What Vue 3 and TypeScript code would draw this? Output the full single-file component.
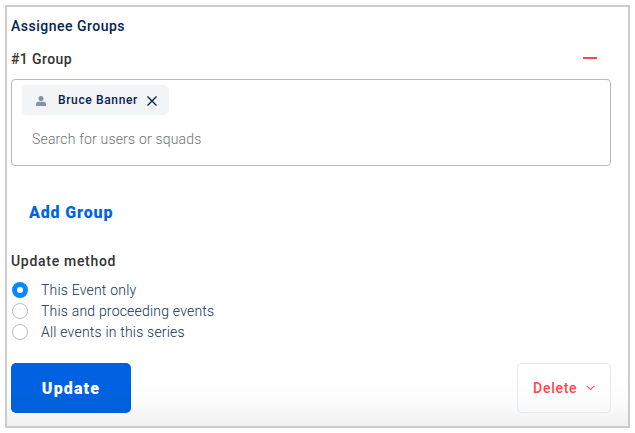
<script setup lang="ts">
import { ref } from 'vue'

interface Option {
  value: string
  label: string
}

const options: Option[] = [
  { value: 'single', label: 'This Event only' },
  { value: 'following', label: 'This and proceeding events' },
  { value: 'all', label: 'All events in this series' },
]
const method = ref('single')
const users = ref(['Bruce Banner'])

function removeUser(name: string) {
  users.value = users.value.filter((u) => u !== name)
}
</script>

<template>
  <main class="panel">
    <h2 class="title">Assignee Groups</h2>
    <div class="group-head">
      <span class="group-name">#1 Group</span>
      <button class="minus" aria-label="Remove group"></button>
    </div>
    <div class="picker">
      <div v-for="user in users" :key="user" class="chip">
        <svg class="person" width="10" height="10" viewBox="0 0 10 10">
          <circle cx="5" cy="2.5" r="2.5" />
          <path d="M0 10V8.200C0 6.400 1 5.700 2.500 5.700h5C9 5.700 10 6.400 10 8.200V10z" />
        </svg>
        <span class="chip-name">{{ user }}</span>
        <svg class="close" width="10" height="10" viewBox="0 0 10 10" @click="removeUser(user)">
          <path d="M.5.5l9 9M9.500.5l-9 9" />
        </svg>
      </div>
      <div class="search">Search for users or squads</div>
    </div>
    <button class="add">Add Group</button>
    <h3 class="subtitle">Update method</h3>
    <div class="options">
      <label v-for="o in options" :key="o.value" class="option" @click="method = o.value">
        <span class="radio" :class="{ on: method === o.value }"></span>
        <span class="option-text">{{ o.label }}</span>
      </label>
    </div>
    <footer class="actions">
      <button class="update">Update</button>
      <button class="delete">
        <span class="delete-text">Delete</span>
        <svg width="9" height="6" viewBox="0 0 9 6"><path d="M.7.8l3.800 3.700L8.300.8" /></svg>
      </button>
    </footer>
  </main>
</template>

<style>
body {
  margin: 0;
  background: #fff;
}
</style>

<style scoped>
.panel {
  box-sizing: border-box;
  width: 625px;
  height: 423px;
  margin: 5px;
  border: 2px solid #ccc;
  padding: 10px 17px 0 4px;
  display: flex;
  flex-direction: column;
  background: linear-gradient(to bottom, #fff 370px, #fbfbfb 398px, #f0f0f0 419px);
  font-family: Roboto, "Liberation Sans", sans-serif;
  white-space: nowrap;
  overflow: hidden;
}
button {
  border: 0;
  padding: 0;
  background: none;
  font-family: inherit;
}
h2,
h3 {
  margin: 0;
}
.title {
  font-size: 14px;
  line-height: 18px;
  font-weight: 500;
  color: #03244f;
  letter-spacing: 0.5px;
}
.group-head {
  display: flex;
  justify-content: space-between;
  align-items: center;
  height: 18px;
  margin-top: 15px;
  padding-right: 14px;
}
.group-name {
  font-size: 14px;
  line-height: 18px;
  font-weight: 500;
  color: #333;
  letter-spacing: 0.4px;
}
.minus {
  width: 14px;
  height: 2px;
  margin-bottom: 2px;
  background: #ff4545;
}
.picker {
  box-sizing: border-box;
  width: 600px;
  height: 87px;
  margin-top: 11px;
  padding: 5px 10px;
  border: 1px solid #b1bac6;
  border-radius: 4px;
}
.chip {
  box-sizing: border-box;
  display: flex;
  align-items: center;
  width: 147px;
  height: 30px;
  padding-left: 14px;
  border-radius: 5px;
  background: #f2f4f6;
}
.person {
  fill: #8492a9;
  margin-top: 2px;
}
.chip-name {
  width: 80px;
  margin-left: 12px;
  font-size: 12px;
  line-height: 16px;
  font-weight: 500;
  color: #03244f;
  letter-spacing: 0.64px;
}
.close {
  margin: 2px 0 0 9px;
  fill: none;
  stroke: #03244f;
  stroke-width: 1.35;
}
.search {
  margin-top: 15px;
  padding-left: 10px;
  font-size: 14px;
  line-height: 18px;
  font-weight: 300;
  color: #707070;
  letter-spacing: 0.18px;
}
.add {
  align-self: flex-start;
  height: 20px;
  margin: 37px 0 0 18px;
  font-size: 16px;
  line-height: 20px;
  font-weight: 900;
  color: #0065e3;
  letter-spacing: 0.85px;
}
.subtitle {
  margin-top: 29px;
  font-size: 14px;
  line-height: 18px;
  font-weight: 500;
  color: #333;
  letter-spacing: 0.7px;
}
.options {
  margin-top: 9px;
}
.option {
  display: flex;
  align-items: center;
  height: 21px;
}
.radio {
  box-sizing: border-box;
  width: 16px;
  height: 16px;
  margin: 0 13px 0 1px;
  border: 1px solid #bbb;
  border-radius: 50%;
  background: #fff;
}
.radio.on {
  border: 5px solid #0788ff;
}
.option-text {
  font-size: 14px;
  line-height: 18px;
  font-weight: 300;
  color: #0f2f5a;
  letter-spacing: 0.2px;
}
.actions {
  display: flex;
  justify-content: space-between;
  width: 600px;
  height: 50px;
  margin-top: 21px;
}
.update {
  width: 120px;
  height: 50px;
  border-radius: 5px;
  background: linear-gradient(to bottom, #0062e0 50%, #005fd8);
  font-size: 16px;
  font-weight: 900;
  color: #fff;
  letter-spacing: 1.15px;
}
.delete {
  box-sizing: border-box;
  display: flex;
  align-items: center;
  width: 94px;
  height: 50px;
  padding: 0 0 1px 15px;
  border: 1px solid #e3eaf5;
  border-radius: 5px;
}
.delete-text {
  width: 44px;
  margin-right: 9px;
  font-size: 14px;
  line-height: 18px;
  font-weight: 500;
  color: #ff4747;
  letter-spacing: 0.75px;
  text-align: left;
}
.delete svg {
  fill: none;
  stroke: #ff5656;
  stroke-width: 1.1;
}
</style>
